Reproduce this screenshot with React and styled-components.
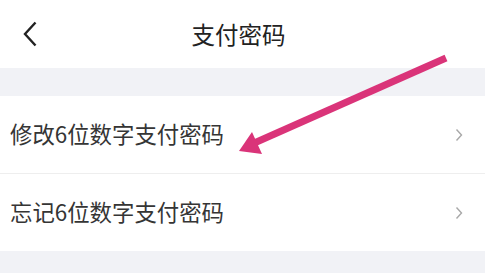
import React from 'react'
import styled, { createGlobalStyle } from 'styled-components'

const GlobalStyle = createGlobalStyle`
  html, body {
    margin: 0;
    padding: 0;
    background: #f1f2f6;
  }
  body {
    font-family: "Noto Sans CJK SC", "Noto Sans", sans-serif;
  }
`

const Page = styled.div`
  position: relative;
  display: flex;
  flex-direction: column;
  width: 485px;
  height: 273px;
  overflow: hidden;
  background: #f1f2f6;
`

const Header = styled.div`
  position: relative;
  display: flex;
  align-items: center;
  justify-content: center;
  height: 68px;
  background: #fff;
`

const BackButton = styled.div`
  position: absolute;
  left: 20px;
  top: 20px;
  width: 20px;
  height: 28px;
  display: flex;
  align-items: center;
  justify-content: center;
`

const Title = styled.div`
  font-size: 23.5px;
  color: #222;
  line-height: 1;
  margin: 1px 8px 0 0;
`

const Spacer = styled.div`
  height: 28px;
`

const List = styled.div`
  display: flex;
  flex-direction: column;
  background: #fff;
`

const Row = styled.div`
  display: flex;
  align-items: center;
  justify-content: space-between;
  height: 77px;
  padding: 0 22px 0 10px;
  border-top: ${({ $divider }) => ($divider ? '1px solid #eeeeee' : 'none')};
`

const RowLabel = styled.div`
  font-size: 22.4px;
  color: #353535;
  line-height: 1;
  margin-bottom: 2px;
`

const Overlay = styled.svg`
  position: absolute;
  left: 0;
  top: 0;
  pointer-events: none;
`

const ChevronRight = () => (
  <svg width="8" height="14" viewBox="0 0 8 14">
    <path d="M1.5 1.5 L6.5 7 L1.5 12.5" fill="none" stroke="#a8a8a8" strokeWidth="1.4" />
  </svg>
)

const ChevronLeft = () => (
  <svg width="14" height="26" viewBox="0 0 14 26">
    <path d="M12.5 1.5 L2 13 L12.5 24.5" fill="none" stroke="#222" strokeWidth="2.4" />
  </svg>
)

export default function App() {
  const items = ['修改6位数字支付密码', '忘记6位数字支付密码']
  return (
    <>
      <GlobalStyle />
      <Page>
        <Header>
          <BackButton>
            <ChevronLeft />
          </BackButton>
          <Title>支付密码</Title>
        </Header>
        <Spacer />
        <List>
          {items.map((label, i) => (
            <Row key={label} $divider={i > 0}>
              <RowLabel>{label}</RowLabel>
              <ChevronRight />
            </Row>
          ))}
        </List>
        <Overlay width="485" height="273" viewBox="0 0 485 273">
          <line x1="446" y1="58" x2="252" y2="144" stroke="#da3479" strokeWidth="7" />
          <polygon points="239,151 252,132 262,154" fill="#da3479" />
        </Overlay>
      </Page>
    </>
  )
}
